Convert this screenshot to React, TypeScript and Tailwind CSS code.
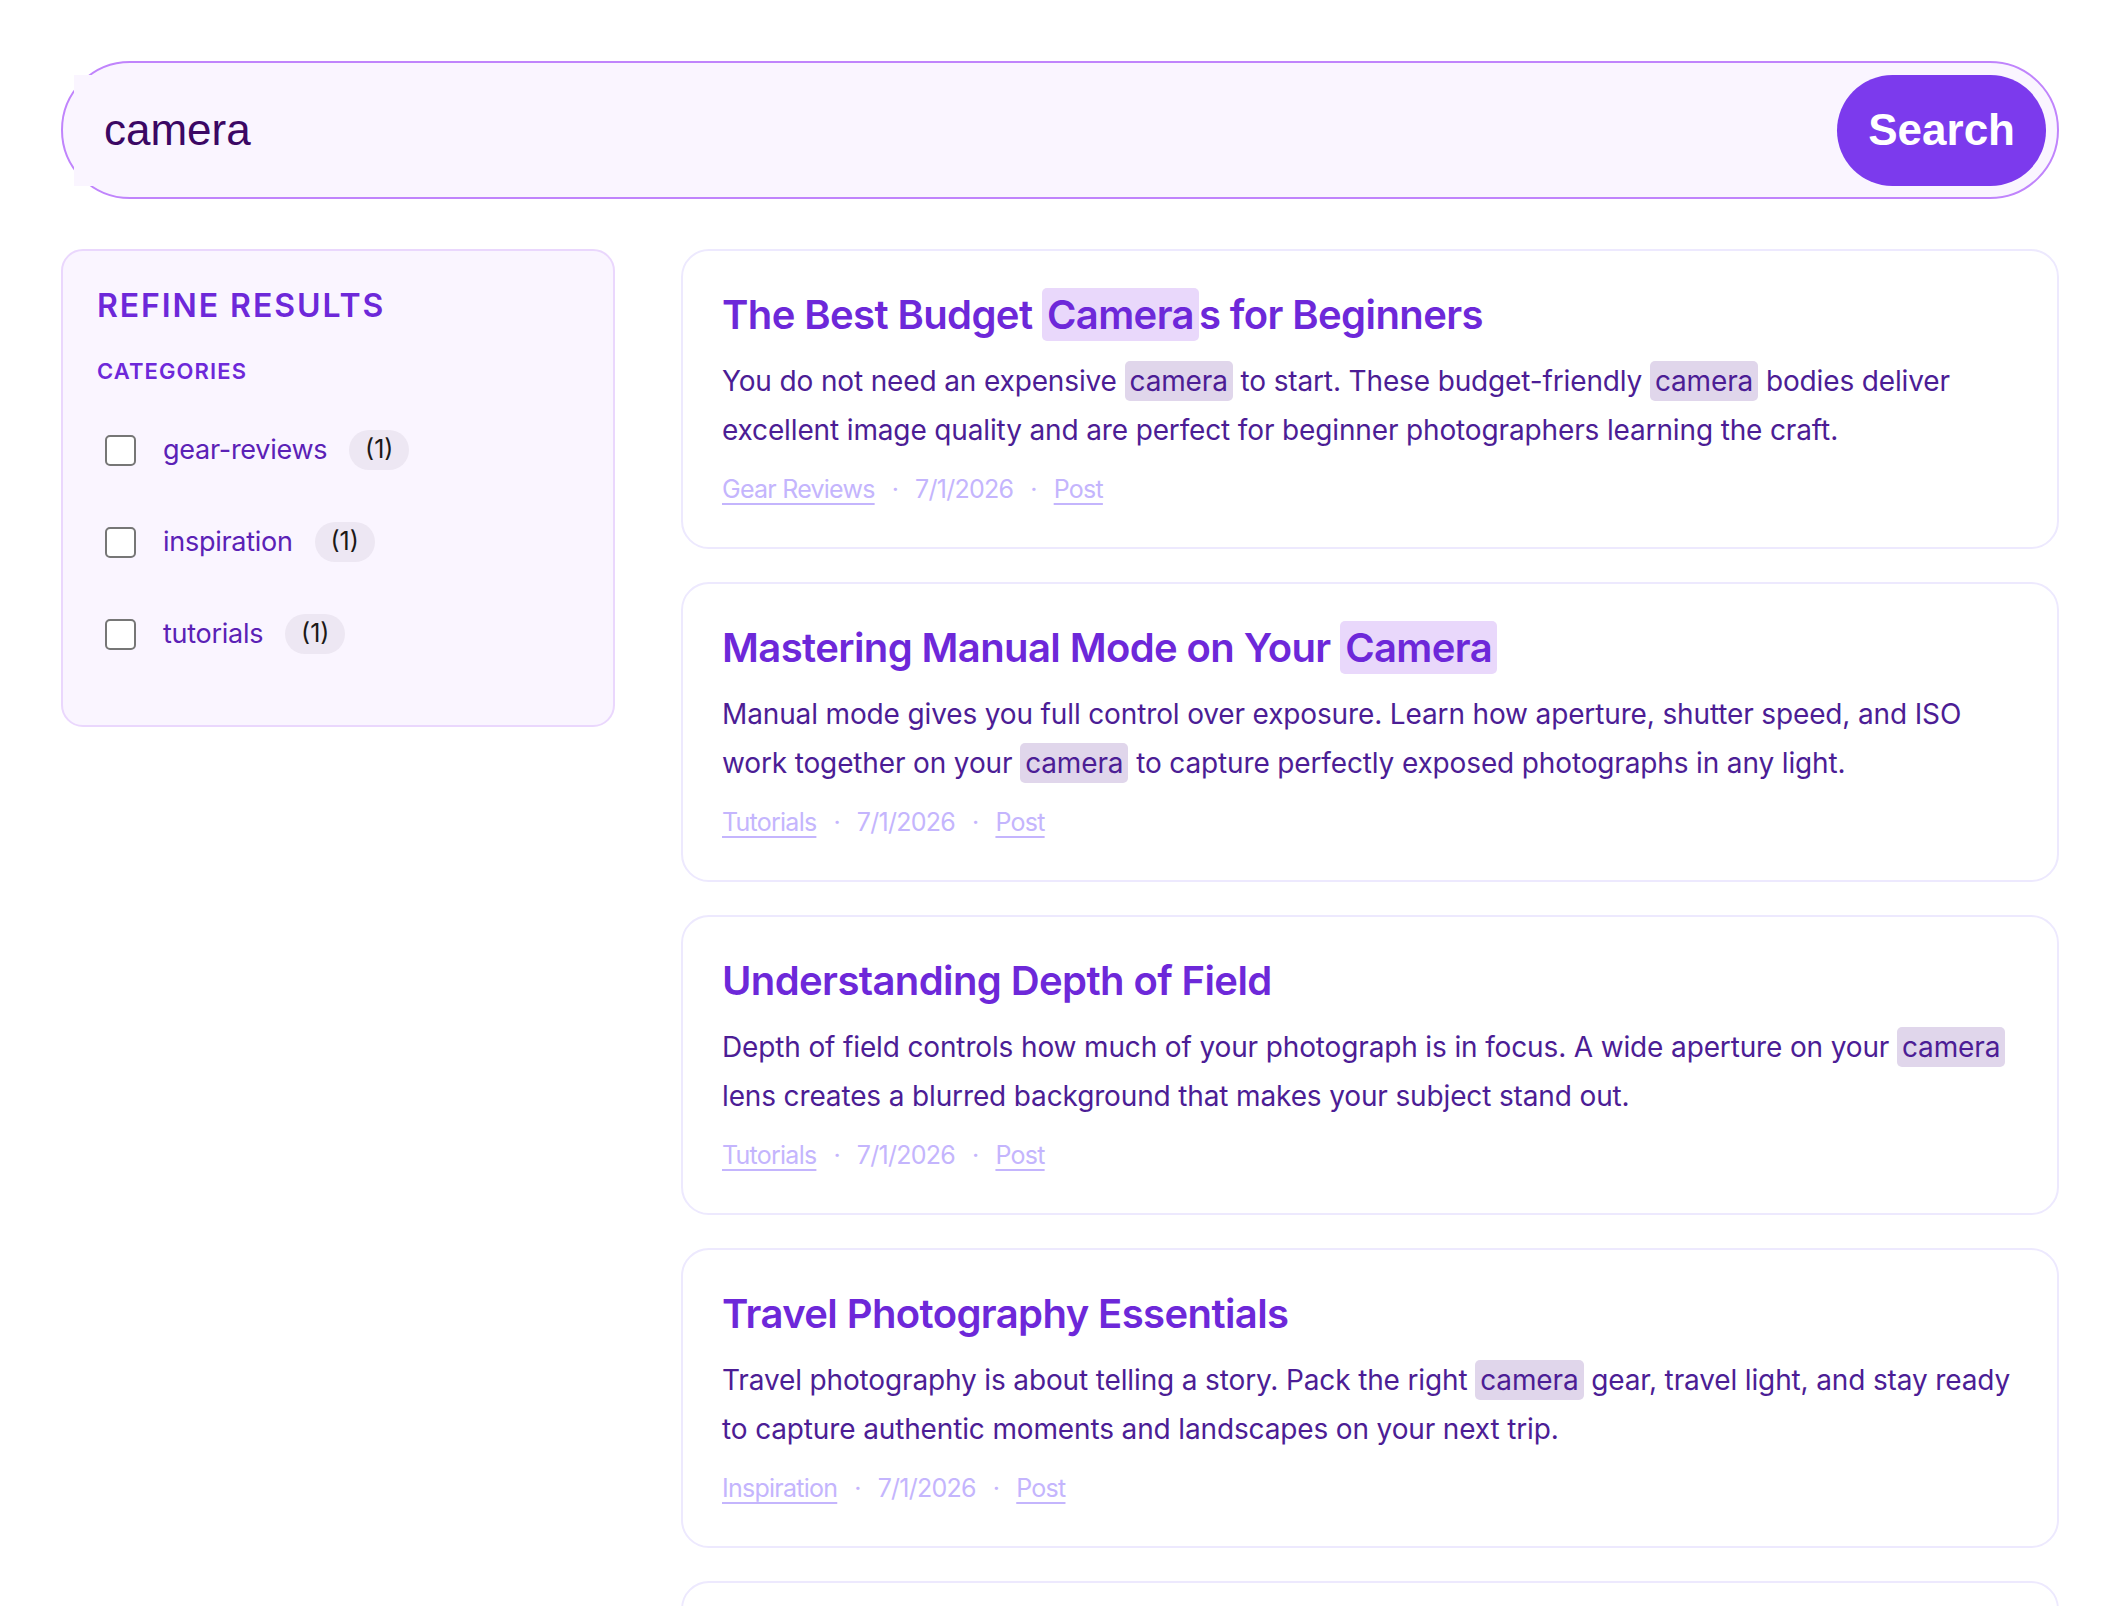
import React from "react";

type Part = string | { hl: string };

type Result = {
  title: Part[];
  body: Part[];
  category: string;
};

const results: Result[] = [
  {
    title: ["The Best Budget ", { hl: "Camera" }, "s for Beginners"],
    body: [
      "You do not need an expensive ",
      { hl: "camera" },
      " to start. These budget-friendly ",
      { hl: "camera" },
      " bodies deliver excellent image quality and are perfect for beginner photographers learning the craft.",
    ],
    category: "Gear Reviews",
  },
  {
    title: ["Mastering Manual Mode on Your ", { hl: "Camera" }],
    body: [
      "Manual mode gives you full control over exposure. Learn how aperture, shutter speed, and ISO work together on your ",
      { hl: "camera" },
      " to capture perfectly exposed photographs in any light.",
    ],
    category: "Tutorials",
  },
  {
    title: ["Understanding Depth of Field"],
    body: [
      "Depth of field controls how much of your photograph is in focus. A wide aperture on your ",
      { hl: "camera" },
      " lens creates a blurred background that makes your subject stand out.",
    ],
    category: "Tutorials",
  },
  {
    title: ["Travel Photography Essentials"],
    body: [
      "Travel photography is about telling a story. Pack the right ",
      { hl: "camera" },
      " gear, travel light, and stay ready to capture authentic moments and landscapes on your next trip.",
    ],
    category: "Inspiration",
  },
  {
    title: ["Choosing Your First ", { hl: "Camera" }, " Lens"],
    body: [
      "Prime or zoom? We break down the lenses that pair best with an entry-level ",
      { hl: "camera" },
      " body.",
    ],
    category: "Gear Reviews",
  },
];

const categories = ["gear-reviews", "inspiration", "tutorials"];

function Title({ parts }: { parts: Part[] }) {
  return (
    <h3 className="text-[40px] leading-[50px] font-semibold tracking-[-0.015em] text-[#6d28d9]">
      {parts.map((p, i) =>
        typeof p === "string" ? (
          <span key={i}>{p}</span>
        ) : (
          <mark
            key={i}
            className="rounded-[5px] bg-[#e9d8fb] px-[5px] py-[2px] text-[#6d28d9]"
          >
            {p.hl}
          </mark>
        )
      )}
    </h3>
  );
}

function Body({ parts }: { parts: Part[] }) {
  return (
    <p className="mt-[17px] text-[28px] leading-[49px] font-normal tracking-[-0.005em] text-[#4c1d95]">
      {parts.map((p, i) =>
        typeof p === "string" ? (
          <span key={i}>{p}</span>
        ) : (
          <mark
            key={i}
            className="rounded-[5px] bg-[#e0d6eb] px-[5px] py-[3px] text-[#4c1d95]"
          >
            {p.hl}
          </mark>
        )
      )}
    </p>
  );
}

export default function App() {
  return (
    <div className="min-h-screen overflow-hidden bg-white px-[61px] pt-[61px] font-['Inter',sans-serif]">
      <form
        className="flex h-[138px] items-center rounded-full border-2 border-[#c084fc] bg-[#faf5ff] p-[11px]"
        onSubmit={(e) => e.preventDefault()}
      >
        <input
          className="h-[111px] min-w-0 flex-1 bg-[#faf5ff] pl-[30px] font-['Liberation_Sans',Arial,sans-serif] text-[44px] text-[#3b0764] outline-none"
          defaultValue="camera"
        />
        <button
          type="submit"
          className="h-[111px] rounded-full bg-[#7c3aed] px-[31px] font-['Liberation_Sans',Arial,sans-serif] text-[44px] font-bold text-white"
        >
          Search
        </button>
      </form>

      <div className="mt-[50px] flex items-start gap-[66px]">
        <aside className="w-[554px] shrink-0 rounded-[22px] border-2 border-[#ead7fd] bg-[#faf5ff] px-[34px] pt-[35px] pb-[69px]">
          <h2 className="text-[32px] leading-[40px] font-semibold tracking-[0.06em] text-[#6d28d9]">
            REFINE RESULTS
          </h2>
          <h3 className="mt-[31px] text-[22px] leading-[28px] font-semibold tracking-[0.05em] text-[#6d28d9]">
            CATEGORIES
          </h3>
          <ul className="mt-[43px] flex flex-col gap-[48px]">
            {categories.map((c) => (
              <li key={c} className="flex h-[44px] items-center">
                <span className="ml-[8px] h-[31px] w-[31px] rounded-[5px] border-2 border-[#767676] bg-white" />
                <span className="ml-[27px] text-[27px] tracking-[-0.01em] text-[#5b21b6]">
                  {c}
                </span>
                <span className="ml-[22px] flex h-[40px] w-[60px] items-center justify-center rounded-full bg-[#ede7f3] text-[25px] text-[#1c1917]">
                  (1)
                </span>
              </li>
            ))}
          </ul>
        </aside>

        <main className="flex min-w-0 flex-1 flex-col gap-[33px]">
          {results.map((r, i) => (
            <article
              key={i}
              className="rounded-[28px] border-2 border-[#ede9fe] bg-white px-[39px] pt-[39px] pb-[40px]"
            >
              <Title parts={r.title} />
              <Body parts={r.body} />
              <div className="mt-[16px] flex items-center gap-[17px] text-[25px] leading-[36px] tracking-[-0.03em] text-[#c4b5fd]">
                <a href="#" className="underline underline-offset-[5px]">
                  {r.category}
                </a>
                <span>·</span>
                <span>7/1/2026</span>
                <span>·</span>
                <a href="#" className="underline underline-offset-[5px]">
                  Post
                </a>
              </div>
            </article>
          ))}
        </main>
      </div>
    </div>
  );
}
